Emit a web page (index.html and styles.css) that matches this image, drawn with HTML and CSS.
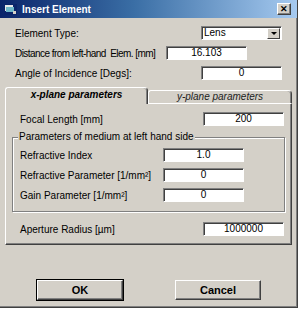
FILE: index.html
```html
<!DOCTYPE html>
<html lang="en">
<head>
    <meta charset="UTF-8">
    <title>Insert Element</title>
    <link rel="stylesheet" href="styles.css">
</head>
<body>
    <!-- Dialog window -->
    <div class="window">
        <div class="titlebar">
            <svg class="app-icon" width="13" height="11" viewBox="0 0 13 11">
                <rect x="0" y="0" width="13" height="11" fill="#0a246a"/>
                <rect x="1" y="1" width="8" height="6" fill="#e8e8e8"/>
                <rect x="2" y="3" width="8" height="5" fill="#6fb7c8"/>
                <rect x="9" y="7" width="3" height="3" fill="#d4d0c8"/>
            </svg>
            <span class="title">Insert Element</span>
            <div class="close-btn">&#x2715;</div>
        </div>

        <div class="content">
            <div class="row">
                <span>Element Type:</span>
                <div class="select">
                    <span>Lens</span>
                    <span class="select-arrow"></span>
                </div>
            </div>
            <div class="row row-distance">
                <span class="tight">Distance from left-hand &nbsp;Elem. [mm]</span>
                <div class="field">16.103</div>
            </div>
            <div class="row">
                <span>Angle of Incidence [Degs]:</span>
                <div class="field">0</div>
            </div>

            <!-- Tabs -->
            <div class="tabs">
                <div class="tab active">x-plane parameters</div>
                <div class="tab">y-plane parameters</div>
            </div>
            <div class="panel">
                <div class="row">
                    <span>Focal Length [mm]</span>
                    <div class="field">200</div>
                </div>

                <div class="group">
                    <span class="group-label">Parameters of medium at left hand side</span>
                    <div class="row">
                        <span>Refractive Index</span>
                        <div class="field">1.0</div>
                    </div>
                    <div class="row">
                        <span>Refractive Parameter [1/mm²]</span>
                        <div class="field">0</div>
                    </div>
                    <div class="row">
                        <span>Gain Parameter [1/mm²]</span>
                        <div class="field">0</div>
                    </div>
                </div>

                <div class="row row-aperture">
                    <span>Aperture Radius [µm]</span>
                    <div class="field">1000000</div>
                </div>
            </div>

            <!-- Buttons -->
            <div class="buttons">
                <button class="btn default">OK</button>
                <button class="btn">Cancel</button>
            </div>
        </div>
    </div>
</body>
</html>
```

FILE: styles.css
```css
* {
    margin: 0;
    padding: 0;
    box-sizing: border-box;
}

body {
    background: #fff;
    font-family: 'Liberation Sans', Arial, sans-serif;
    font-size: 10px;
    color: #000;
}

.window {
    width: 298px;
    height: 308px;
    background: #d4d0c8;
    border-right: 1px solid #404040;
    border-bottom: 1px solid #404040;
    box-shadow: inset -1px -1px #808080;
    display: flex;
    flex-direction: column;
}

/* Title bar */
.titlebar {
    height: 18px;
    flex-shrink: 0;
    background: linear-gradient(to right, #0a246a, #3a6ea5 45%, #a6caf0);
    display: flex;
    align-items: center;
    padding: 0 4px 0 4px;
}

.app-icon {
    margin-right: 5px;
}

.title {
    color: #fff;
    font-weight: bold;
    font-size: 10px;
    flex: 1;
}

.close-btn {
    width: 14px;
    height: 12px;
    background: #d4d0c8;
    border: 1px solid;
    border-color: #fff #404040 #404040 #fff;
    box-shadow: inset -1px -1px #808080;
    font-size: 9px;
    font-weight: bold;
    line-height: 10px;
    text-align: center;
    margin-right: 2px;
}

/* Content */
.content {
    flex: 1;
    padding: 5px 4px 0 5px;
    display: flex;
    flex-direction: column;
}

.row {
    height: 20px;
    flex-shrink: 0;
    display: flex;
    align-items: center;
    justify-content: space-between;
    padding: 0 11px 0 10px;
    white-space: nowrap;
}

.row-distance {
    padding-right: 46px;
}

.tight {
    letter-spacing: -0.55px;
}

.field,
.select {
    width: 81px;
    height: 14px;
    background: #fff;
    border: 1px solid;
    border-color: #808080 #fff #fff #808080;
    box-shadow: inset 1px 1px #404040;
    text-align: center;
    line-height: 12px;
}

.select {
    display: flex;
    align-items: center;
    justify-content: space-between;
    text-align: left;
    padding-left: 2px;
}

.select-arrow {
    width: 13px;
    height: 11px;
    background: #d4d0c8;
    border: 1px solid;
    border-color: #fff #404040 #404040 #fff;
    position: relative;
    margin-right: 1px;
}

.select-arrow::after {
    content: '';
    position: absolute;
    left: 3px;
    top: 3px;
    border-left: 3px solid transparent;
    border-right: 3px solid transparent;
    border-top: 3px solid #000;
}

/* Tabs */
.tabs {
    display: flex;
    align-items: flex-end;
    height: 18px;
    flex-shrink: 0;
    margin-top: 2px;
}

.tab {
    width: 144px;
    height: 13px;
    font-style: italic;
    text-align: center;
    line-height: 12px;
    border: 1px solid;
    border-bottom: none;
    border-color: #fff #404040 #fff #fff;
    border-radius: 3px 4px 0 0;
    box-shadow: inset -1px 0 #808080;
    color: #222;
}

.tab.active {
    width: 143px;
    height: 17px;
    font-weight: bold;
    line-height: 14px;
    margin-bottom: -1px;
    position: relative;
    background: #d4d0c8;
    color: #000;
}

.panel {
    height: 142px;
    flex-shrink: 0;
    border: 1px solid;
    border-color: #fff #404040 #404040 #fff;
    box-shadow: inset -1px -1px #808080;
    margin-right: 1px;
    padding-top: 5px;
}

.panel > .row {
    padding: 0 7px 0 14px;
}

.panel > .row-aperture {
    margin-top: 7px;
}

/* Group box */
.group {
    margin: 8px 6px 0 6px;
    border: 1px solid #808080;
    box-shadow: 1px 1px #fff, inset 1px 1px #fff;
    height: 75px;
    position: relative;
    padding-top: 7px;
}

.group-label {
    position: absolute;
    top: -7px;
    left: 5px;
    background: #d4d0c8;
    padding: 0 1px;
}

.group .row {
    padding: 0 40px 0 7px;
}

/* Buttons */
.buttons {
    display: flex;
    padding: 35px 0 0 32px;
    gap: 52px;
}

.btn {
    width: 86px;
    height: 20px;
    font-family: 'Liberation Sans', Arial, sans-serif;
    font-size: 11px;
    font-weight: bold;
    background: #d4d0c8;
    border: 1px solid;
    border-color: #fff #404040 #404040 #fff;
    box-shadow: inset -1px -1px #808080;
}

.btn.default {
    outline: 1px solid #000;
}
```
